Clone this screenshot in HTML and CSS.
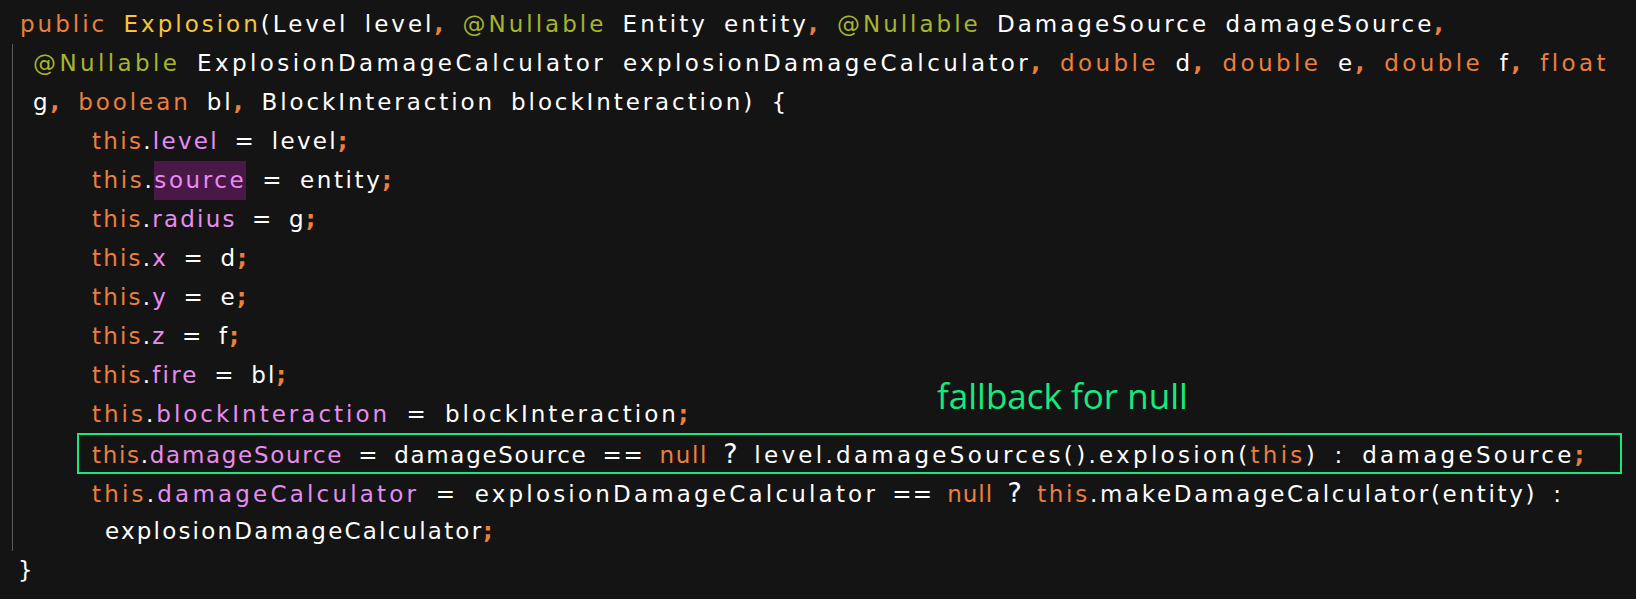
FILE: index.html
```html
<!DOCTYPE html>
<html>
<head>
<meta charset="utf-8">
<link rel="stylesheet" href="styles.css">
</head>
<body>
<div class="code">
  <div class="line l-top ls30"><span class="kw">public</span> <span class="fn">Explosion</span>(Level level<span class="p">,</span> <span class="an">@Nullable</span> Entity entity<span class="p">,</span> <span class="an">@Nullable</span> DamageSource damageSource<span class="p">,</span></div>
  <div class="block">
    <div class="line l-wrap ls34"><span class="an">@Nullable</span> ExplosionDamageCalculator explosionDamageCalculator<span class="p">,</span> <span class="kw">double</span> d<span class="p">,</span> <span class="kw">double</span> e<span class="p">,</span> <span class="kw">double</span> f<span class="p">,</span> <span class="kw">float</span></div>
    <div class="line l-wrap ls29">g<span class="p">,</span> <span class="kw">boolean</span> bl<span class="p">,</span> BlockInteraction blockInteraction) {</div>
    <div class="line l-body ls23"><span class="kw">this</span>.<span class="fd">level</span> = level<span class="p">;</span></div>
    <div class="line l-body ls26"><span class="kw">this</span>.<span class="fd hl">source</span> = entity<span class="p">;</span></div>
    <div class="line l-body"><span class="kw">this</span>.<span class="fd">radius</span> = g<span class="p">;</span></div>
    <div class="line l-body"><span class="kw">this</span>.<span class="fd">x</span> = d<span class="p">;</span></div>
    <div class="line l-body"><span class="kw">this</span>.<span class="fd">y</span> = e<span class="p">;</span></div>
    <div class="line l-body"><span class="kw">this</span>.<span class="fd">z</span> = f<span class="p">;</span></div>
    <div class="line l-body"><span class="kw">this</span>.<span class="fd">fire</span> = bl<span class="p">;</span></div>
    <div class="line l-body ls30"><span class="kw">this</span>.<span class="fd">blockInteraction</span> = blockInteraction<span class="p">;</span></div>
    <div class="line l-box"><span class="ls17"><span class="kw">this</span>.<span class="fd">damageSource</span> = damageSource == <span class="kw">null</span> <span class="q">?</span> </span><span class="ls33">level.damageSources().explosion(<span class="kw">this</span>) : damageSource<span class="p">;</span></span></div>
    <div class="line l-body"><span class="ls32"><span class="kw">this</span>.<span class="fd">damageCalculator</span> = explosionDamageCalculator</span><span class="ls10"> == <span class="kw">null</span> <span class="q">?</span> </span><span class="ls27"><span class="kw">this</span>.makeDamageCalculator(entity) :</span></div>
    <div class="line l-cont">explosionDamageCalculator<span class="p">;</span></div>
  </div>
  <div class="line l-end">}</div>
  <div class="note">fallback for null</div>
</div>
</body>
</html>
```
FILE: styles.css
```css
html, body {
  margin: 0;
  padding: 0;
  background: #141414;
}
.code {
  position: relative;
  width: 1636px;
  height: 599px;
  padding-top: 5px;
  box-sizing: border-box;
  font-family: "DejaVu Sans", sans-serif;
  font-size: 23px;
  letter-spacing: 2.2px;
  word-spacing: 6px;
  color: #ffffff;
}
.line {
  height: 39px;
  line-height: 39px;
  white-space: pre;
}
.ls10 { letter-spacing: 1.0px; }
.ls17 { letter-spacing: 1.7px; }
.ls23 { letter-spacing: 2.3px; }
.ls26 { letter-spacing: 2.6px; }
.ls27 { letter-spacing: 2.7px; }
.ls29 { letter-spacing: 2.9px; }
.ls30 { letter-spacing: 3.0px; }
.ls32 { letter-spacing: 3.2px; }
.ls33 { letter-spacing: 3.3px; }
.ls34 { letter-spacing: 3.4px; }
.l-top { padding-left: 20px; }
.block {
  margin-left: 12px;
  border-left: 1px solid #5c5c5c;
}
.l-wrap { padding-left: 20px; }
.l-body { padding-left: 79px; }
.l-cont { padding-left: 92px; }
.l-end { padding-left: 18px; }
.l-box {
  box-sizing: border-box;
  margin: -1px 0 -1px 64px;
  width: 1545px;
  height: 41px;
  line-height: 37px;
  border: 2px solid #17e97f;
  padding-left: 13px;
}
.kw { color: #ec7f3e; }
.fn { color: #f8c53a; }
.an { color: #a6b52e; }
.fd { color: #e88cf0; }
.p { color: #ec7f3e; font-weight: bold; }
.q { font-size: 27px; }
.hl {
  background: #4a1847;
  display: inline-block;
  height: 39px;
}
.note {
  position: absolute;
  left: 937px;
  top: 372px;
  font-family: "Open Sans", sans-serif;
  font-size: 35px;
  letter-spacing: 0;
  word-spacing: 0;
  line-height: 48px;
  color: #17e97f;
}
```
